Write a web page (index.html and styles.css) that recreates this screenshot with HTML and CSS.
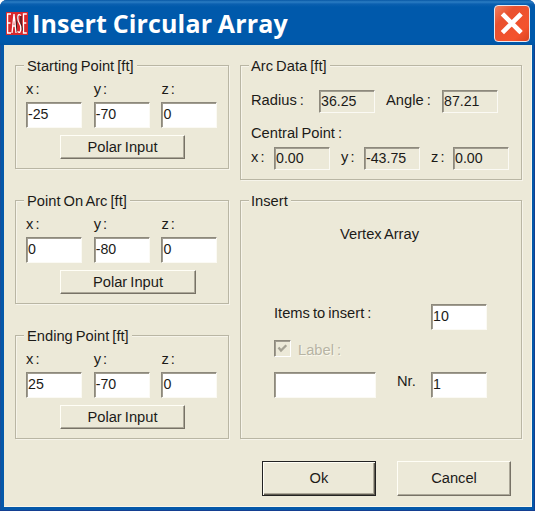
FILE: index.html
```html
<!DOCTYPE html>
<html lang="en">
<head>
<meta charset="utf-8">
<title>Insert Circular Array</title>
<link rel="stylesheet" href="styles.css">
</head>
<body>
<div class="window">
  <header class="titlebar">
    <svg class="logo" width="22" height="23" viewBox="0 0 22 23" aria-hidden="true">
      <rect width="22" height="23" fill="#d8282c"/>
      <path d="M10.4 20V12L12 3M15 4V11L17 19" fill="none" stroke="#391c1c" stroke-width="1.2"/>
      <path d="M5 2H1.6V21H5M1.6 11H4.5M6 21L8 2L10 21M6.8 14H9.4M15 3.5Q11.6 1 11.8 6Q11.8 9 13.2 11Q15 13.500 14.800 17Q14.500 22 11.500 19.500M20.800 2H17.500V21H20.800M17.500 11H20.300" fill="none" stroke="#fff" stroke-width="1.300"/>
    </svg>
    <h1 class="title">Insert Circular Array</h1>
    <button class="close" aria-label="Close">
      <svg width="32" height="32" viewBox="0 0 32 32"><path d="M8 8.500L23.500 24M23.500 8.500L8 24" stroke="#fff" stroke-width="4.600" stroke-linecap="square"/></svg>
    </button>
  </header>
  <main class="client">
    <section class="points">
      <div class="group point">
        <div class="legend">Starting Point [ft]</div>
        <div class="coords">
          <label>x :<span class="field">-25</span></label>
          <label>y :<span class="field">-70</span></label>
          <label>z :<span class="field">0</span></label>
        </div>
        <button class="button polar">Polar Input</button>
      </div>
      <div class="group point">
        <div class="legend">Point On Arc [ft]</div>
        <div class="coords">
          <label>x :<span class="field">0</span></label>
          <label>y :<span class="field">-80</span></label>
          <label>z :<span class="field">0</span></label>
        </div>
        <button class="button polar wide">Polar Input</button>
      </div>
      <div class="group point">
        <div class="legend">Ending Point [ft]</div>
        <div class="coords">
          <label>x :<span class="field">25</span></label>
          <label>y :<span class="field">-70</span></label>
          <label>z :<span class="field">0</span></label>
        </div>
        <button class="button polar">Polar Input</button>
      </div>
    </section>
    <section class="details">
      <div class="group arc">
        <div class="legend">Arc Data [ft]</div>
        <div class="measures">
          <span>Radius :</span><span class="field readonly">36.25</span>
          <span>Angle :</span><span class="field readonly">87.21</span>
        </div>
        <div class="central">Central Point :</div>
        <div class="center-row">
          <span>x :</span><span class="field readonly">0.00</span>
          <span>y :</span><span class="field readonly">-43.75</span>
          <span>z :</span><span class="field readonly">0.00</span>
        </div>
      </div>
      <div class="group insert">
        <div class="legend">Insert</div>
        <div class="kind">Vertex Array</div>
        <div class="items"><span>Items to insert :</span><span class="field">10</span></div>
        <div class="check">
          <span class="box"><svg width="13" height="13" viewBox="0 0 13 13"><path d="M2.500 5.500L5 8.500L10.300 3.200" fill="none" stroke="#a5a294" stroke-width="2.300"/></svg></span>
          <span class="check-text">Label :</span>
        </div>
        <div class="number"><span class="field"></span><span class="nr">Nr.</span><span class="field">1</span></div>
      </div>
      <div class="actions">
        <button class="button default">Ok</button>
        <button class="button">Cancel</button>
      </div>
    </section>
  </main>
</div>
</body>
</html>
```
FILE: styles.css
```css
* { box-sizing: border-box; }

body {
  margin: 0;
  background: #fff;
  font: 14.700px/16px "Liberation Sans", Arial, sans-serif;
  word-spacing: -1px;
  color: #1c1b18;
}

.window {
  width: 535px;
  height: 511px;
  padding: 0 4px 4px;
  background: #0458a9;
  border-radius: 7px 7px 0 0;
  box-shadow: inset -1px -1px #143f91, inset 1px 0 #174f9c;
  overflow: hidden;
}

.titlebar {
  display: flex;
  height: 45px;
  margin: 0 -4px;
  padding: 0 5px 0 6px;
  background: linear-gradient(#0757a5 0, #2b7dc3 2px, #0b60b0 4px, #0059ab 7px, #0059ab 41px, #0054a3);
}

.logo { margin-top: 12px; }

.title {
  margin: 6px 0 0 4px;
  font: bold 25px/34px "Open Sans", sans-serif;
  letter-spacing: 0.150px;
  white-space: nowrap;
  color: #fff;
}

.close {
  width: 36px;
  height: 37px;
  margin: 5px 0 0 auto;
  padding: 1px;
  border: 1px solid #e9e7ed;
  border-radius: 4px;
  background: linear-gradient(135deg, #f0805f, #e9512f 30%, #f4532d 75%, #d94420);
}

.client {
  display: flex;
  gap: 11px;
  width: 528px;
  height: 462px;
  padding: 20px 10px 0 11px;
  background: #ece9d8;
  box-shadow: inset -1px -1px #f8f6ea;
}

.group {
  border: 1px solid #b9b6a4;
  box-shadow: inset 1px 1px #f6f4ea, 1px 1px #f6f4ea;
}

.legend {
  width: max-content;
  height: 16px;
  margin: -8px 0 0 -2px;
  padding: 0 3px 0 2px;
  background: #ece9d8;
  white-space: nowrap;
}

.points { width: 214px; }

.point {
  height: 104px;
  margin-bottom: 31px;
  padding-left: 10px;
}

.point .legend { padding-left: 3px; }

.coords {
  display: flex;
  gap: 11.700px;
  margin-top: 7px;
  word-spacing: -2px;
}

.coords .field { margin-top: 5px; }

.field {
  display: block;
  width: 56px;
  height: 26px;
  padding: 3px 0 0 1px;
  border: 1px solid;
  border-color: #8d897c #fbfaf4 #fbfaf4 #8d897c;
  box-shadow: inset 1px 1px #a09c90;
  background: #fff;
  font-size: 14.200px;
}

.readonly {
  height: 23px;
  padding-top: 2px;
  background: #ece9d8;
}

.button {
  display: block;
  width: 114px;
  height: 35px;
  padding: 0 0 1px;
  border: 1px solid;
  border-color: #fffef6 #777266 #777266 #fffef6;
  border-radius: 0;
  box-shadow: inset -1px -1px #aca899;
  background: #ece9d8;
  font: inherit;
  word-spacing: inherit;
  color: inherit;
}

.polar {
  width: 125px;
  height: 24px;
  margin: 7px 0 0 34px;
}

.wide { width: 136px; }

.details { width: 282px; }

.arc {
  height: 115px;
  padding-left: 10px;
}

.measures {
  display: grid;
  grid-template-columns: 68px 67px 56px 57px;
  margin-top: 16px;
}

.measures > :not(.field), .center-row > :not(.field) { margin-top: 2px; }

.central { margin-top: 12px; }

.center-row {
  display: grid;
  grid-template-columns: 23px 67px 23px 67px 22px 56px;
  margin-top: 6px;
  word-spacing: -2px;
}

.insert {
  height: 239px;
  margin-top: 20px;
  padding-left: 10px;
}

.kind { margin: 17px 0 0 89px; }

.items {
  display: grid;
  grid-template-columns: 157px 56px;
  margin: 62px 0 0 23px;
}

.items > :first-child { margin-top: 1px; }

.check {
  display: flex;
  gap: 7px;
  margin: 10px 0 0 23px;
}

.box {
  width: 17px;
  height: 17px;
  padding: 1px;
  border: 1px solid;
  border-color: #8d897c #fff #fff #8d897c;
  box-shadow: inset 1px 1px #a09c90;
}

.box svg { display: block; }

.check-text {
  margin-top: 2px;
  color: #b7b4a4;
  text-shadow: 1px 1px #faf8ed;
}

.number {
  display: grid;
  grid-template-columns: 123px 34px 56px;
  margin: 14px 0 0 23px;
}

.number > :first-child { width: 102px; }

.nr { margin-top: 1px; }

.actions {
  display: flex;
  gap: 21px;
  margin: 22px 0 0 22px;
}

.default {
  border-color: #222;
  box-shadow: inset 1px 1px #fffef6, inset -1px -1px #5f5b50, inset -2px -2px #aca899;
}
```
